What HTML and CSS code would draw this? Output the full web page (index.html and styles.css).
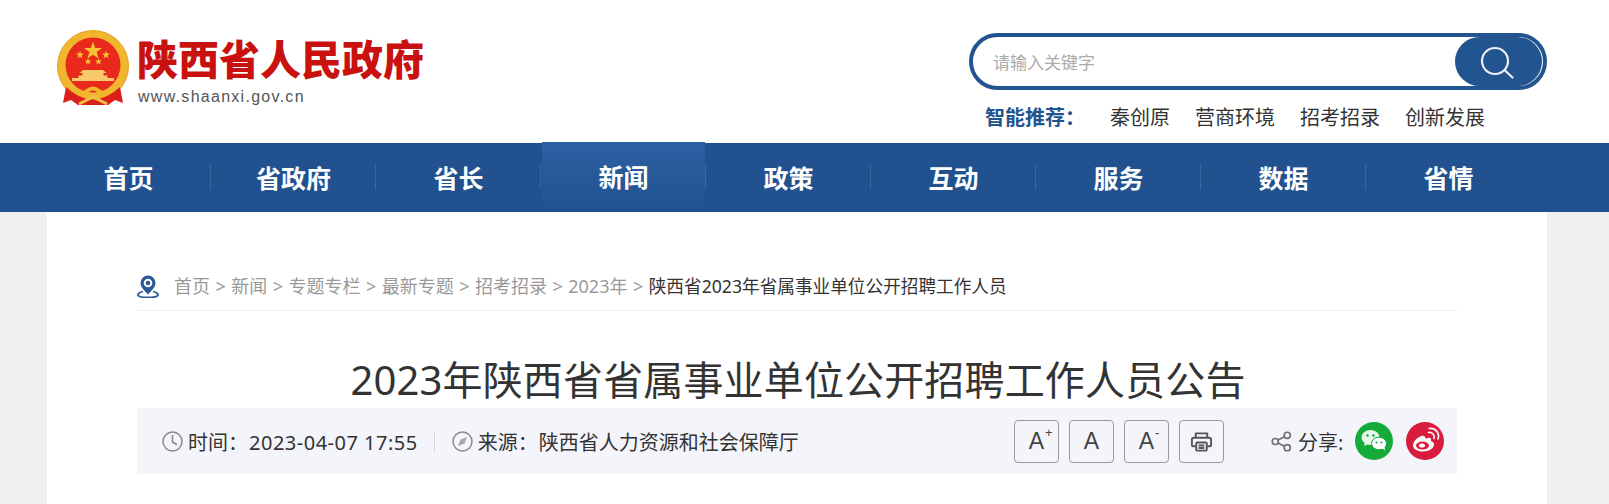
FILE: index.html
```html
<!DOCTYPE html>
<html lang="zh-CN">
<head>
<meta charset="utf-8">
<title>2023年陕西省省属事业单位公开招聘工作人员公告</title>
<link rel="stylesheet" href="styles.css">
</head>
<body>
<header class="header">
  <a class="logo">
    <svg class="emblem" viewBox="0 -4 72 76" width="72" height="76">
      <circle cx="36" cy="32" r="35.500" fill="#f2b52e"/>
      <circle cx="36" cy="32" r="35.500" fill="none" stroke="#e3a021" stroke-width="1"/>
      <circle cx="36" cy="31" r="27.500" fill="#e8291c"/>
      <path d="M36 7.500l2.200 6.400 6.800.1-5.400 4.100 2 6.500-5.600-3.900-5.600 3.900 2-6.500-5.400-4.100 6.800-.1z" fill="#f6c531"/>
      <path d="M23 16.500l1 2.900 3.100.1-2.500 1.900.9 3-2.500-1.800-2.500 1.800.9-3-2.500-1.900 3.100-.1z" fill="#f6c531"/>
      <path d="M49 16.500l1 2.900 3.100.1-2.500 1.900.9 3-2.500-1.800-2.500 1.800.9-3-2.500-1.900 3.100-.1z" fill="#f6c531"/>
      <path d="M31 24l.9 2.400 2.600.1-2 1.600.7 2.500-2.200-1.500-2.200 1.500.7-2.500-2-1.600 2.600-.1z" fill="#f6c531"/>
      <path d="M41.500 24l.9 2.400 2.600.1-2 1.600.7 2.500-2.200-1.500-2.200 1.500.7-2.500-2-1.600 2.600-.1z" fill="#f6c531"/>
      <path d="M26 36h20l3.500 3h-3v2.500h4v3H21.500v-3h4V39h-3z" fill="#f6c96a"/>
      <rect x="15" y="44" width="42" height="3" fill="#f6c96a"/>
      <path d="M9 53 L6 69 L14 66 L21 71 L51 71 L58 66 L66 69 L63 53 Q36 78 9 53Z" fill="#d9201a"/>
      <path d="M13 50 Q22 64 30 57 Q36 52 42 57 Q50 64 59 50" fill="none" stroke="#f2b52e" stroke-width="4"/>
      <path d="M22 70 L36 63 L50 70" fill="none" stroke="#f2c14a" stroke-width="3"/>
    </svg>
    <div class="logo-text">
      <div class="logo-title">陕西省人民政府</div>
      <div class="logo-url">www.shaanxi.gov.cn</div>
    </div>
  </a>
  <div class="tools">
    <form class="search">
      <span class="placeholder">请输入关键字</span>
      <button class="search-btn" type="button" aria-label="搜索">
        <svg viewBox="0 0 36 36" width="36" height="36" fill="none" stroke="#eef2f8" stroke-width="2.200" stroke-linecap="round"><circle cx="14" cy="17" r="13"/><path d="M24.500 27l7 6.500"/></svg>
      </button>
    </form>
    <div class="recommend">
      <b class="recommend-label">智能推荐：</b>
      <a>秦创原</a><a>营商环境</a><a>招考招录</a><a>创新发展</a>
    </div>
  </div>
</header>

<nav class="nav">
  <div class="nav-inner">
    <a class="nav-item">首页</a>
    <a class="nav-item">省政府</a>
    <a class="nav-item">省长</a>
    <a class="nav-item active">新闻</a>
    <a class="nav-item">政策</a>
    <a class="nav-item">互动</a>
    <a class="nav-item">服务</a>
    <a class="nav-item">数据</a>
    <a class="nav-item">省情</a>
  </div>
</nav>

<main class="main">
  <div class="crumbs">
    <svg class="pin" viewBox="0 0 22 24" width="22" height="24">
      <path d="M11 1.500a7.500 7.500 0 0 0-7.500 7.500c0 4.500 4 7.500 7.500 11.500 3.500-4 7.500-7 7.500-11.500A7.500 7.500 0 0 0 11 1.500z" fill="#2a5a96"/>
      <circle cx="11" cy="9" r="4.300" fill="#fff"/><circle cx="11" cy="9" r="2.300" fill="#2a5a96"/>
      <path d="M6 17.500C3 18.300 1 19.400 1 20.700 1 22.500 5.500 23.500 11 23.500s10-1 10-2.800c0-1.300-2-2.400-5-3.200" fill="none" stroke="#2a5a96" stroke-width="1.800"/>
    </svg>
    <span class="crumb-trail">首页 &gt; 新闻 &gt; 专题专栏 &gt; 最新专题 &gt; 招考招录 &gt; 2023年 &gt; <em class="crumb-current">陕西省2023年省属事业单位公开招聘工作人员</em></span>
  </div>
  <h1 class="title">2023年陕西省省属事业单位公开招聘工作人员公告</h1>
  <div class="meta">
    <svg class="meta-icon" viewBox="0 0 21 21" width="21" height="21" fill="none" stroke="#8a8a8a" stroke-width="1.500"><circle cx="10.500" cy="10.500" r="9.500"/><path d="M10.500 4.500v6.500l4 2.500" stroke-linecap="round"/></svg>
    <span class="meta-time">时间：<span class="meta-date">2023-04-07 17:55</span></span>
    <span class="meta-sep"></span>
    <svg class="meta-icon" viewBox="0 0 21 21" width="21" height="21" fill="none" stroke="#8a8a8a" stroke-width="1.500"><circle cx="10.500" cy="10.500" r="9.500"/><path d="M15 6l-6.500 2.500L6 15l6.500-2.500z" fill="#a8a8a8" stroke="none"/></svg>
    <span class="meta-source">来源：<span class="meta-org">陕西省人力资源和社会保障厅</span></span>
    <div class="font-btns">
      <span class="fbtn">A<sup class="fsup">+</sup></span>
      <span class="fbtn">A</span>
      <span class="fbtn">A<sup class="fsup">-</sup></span>
      <span class="fbtn">
        <svg viewBox="0 0 24 24" width="23" height="23" fill="none" stroke="#555" stroke-width="2" stroke-linejoin="round"><path d="M6 8V3.500h12V8"/><path d="M6 17H3a1 1 0 0 1-1-1v-6a2 2 0 0 1 2-2h16a2 2 0 0 1 2 2v6a1 1 0 0 1-1 1h-3"/><rect x="6.500" y="13" width="11" height="8.500" rx="1"/><path d="M9 16.200h6M9 18.800h6"/></svg>
      </span>
    </div>
    <svg class="share-icon" viewBox="0 0 22 22" width="21" height="21" fill="none" stroke="#6e6e6e" stroke-width="1.700"><circle cx="4.500" cy="11" r="3.200"/><circle cx="17" cy="4.500" r="3.200"/><circle cx="17" cy="17.500" r="3.200"/><path d="M7.400 9.500l6.700-3.500M7.400 12.500l6.700 3.500"/></svg>
    <span class="share-label">分享:</span>
    <span class="social wechat">
      <svg viewBox="0 0 38 38" width="38" height="38">
        <ellipse cx="15.500" cy="15.500" rx="9" ry="7.500" fill="#e6f6ea"/><path d="M10 20l-1 4 5-2.500z" fill="#e6f6ea"/>
        <ellipse cx="24" cy="21.500" rx="7.500" ry="6.300" fill="#fff" stroke="#14ab39" stroke-width="1"/><path d="M27 26l3 2.500-.5-4z" fill="#fff"/>
        <circle cx="12.500" cy="13.500" r="1.200" fill="#14ab39"/><circle cx="18.500" cy="13.500" r="1.200" fill="#14ab39"/>
        <circle cx="21.500" cy="20.500" r="1" fill="#14ab39"/><circle cx="26.500" cy="20.500" r="1" fill="#14ab39"/>
      </svg>
    </span>
    <span class="social weibo">
      <svg viewBox="0 0 38 38" width="38" height="38">
        <path d="M16.500 13.500c-5 1.500-9.500 6-9.500 10 0 3.500 4.500 6 10 6 6.500 0 11-3.500 11-7 0-2.200-2-3-3.200-3.400.8-2 .2-3.600-2.800-3.200-1.300.2-2.500.8-2.500.8s.5-3-3-3z" fill="#fff"/>
        <ellipse cx="16.500" cy="23.500" rx="6.500" ry="4" fill="#d91c3d"/>
        <ellipse cx="16" cy="23.500" rx="3" ry="2" fill="#fff"/>
        <path d="M22.500 10.500c3.800-.6 6.500 2.500 5.500 6M23 6.500c6.500-1 11 4.500 9 10.500" fill="none" stroke="#fff" stroke-width="1.600" stroke-linecap="round"/>
      </svg>
    </span>
  </div>
</main>
</body>
</html>
```
FILE: styles.css
```css
* { box-sizing: border-box; }
html, body { margin: 0; padding: 0; }
body {
  background: #f0f0f0;
  font-family: "Noto Sans", "Noto Sans CJK SC", "Liberation Sans", sans-serif;
  color: #333;
  overflow: hidden;
  height: 504px;
}
.header {
  height: 143px;
  background: #fff;
  display: flex;
  justify-content: space-between;
  padding: 30px 62px 0 57px;
}
.logo { display: flex; align-items: flex-start; height: 76px; }
.emblem { display: block; flex: none; }
.logo-text { margin-left: 8px; }
.logo-title {
  font-size: 41px;
  line-height: 42px;
  margin-top: 8px;
  font-weight: 900;
  color: #c9120f;
  width: 287px;
  white-space: nowrap;
}
.logo-url {
  font-family: "Liberation Sans", sans-serif;
  font-size: 16px;
  line-height: 20px;
  margin-top: 7px;
  margin-left: 1px;
  letter-spacing: 1.28px;
  color: #555;
}
.tools { width: 578px; padding-top: 3px; }
.search {
  height: 57px;
  border: 4px solid #22548f;
  border-radius: 29px;
  display: flex;
  align-items: center;
  justify-content: space-between;
  padding: 0 1px 0 20px;
}
.placeholder { font-size: 17px; color: #aaa; }
.search-btn {
  width: 87px;
  height: 49px;
  border: 0;
  border-radius: 25px;
  background: #22548f;
  padding: 0;
  display: flex;
  align-items: center;
  justify-content: center;
}
.recommend {
  display: flex;
  align-items: center;
  margin-top: 14px;
  padding-left: 16px;
  font-size: 20px;
  line-height: 28px;
  color: #333;
}
.recommend a { margin-right: 25px; }
.recommend-label { color: #22548f; font-weight: 700; width: 125px; white-space: nowrap; }
.nav { height: 69px; background: #21528f; }
.nav-inner { display: flex; height: 69px; margin-left: 45px; width: 1485px; }
.nav-item {
  width: 165px;
  height: 69px;
  display: flex;
  align-items: center;
  justify-content: center;
  padding: 0 0 2px 2px;
  color: #fff;
  font-size: 25px;
  font-weight: 700;
  position: relative;
}
.nav-item + .nav-item::before {
  content: "";
  position: absolute;
  left: 0;
  top: 22px;
  height: 25px;
  width: 1px;
  background: #3a67a0;
}
.nav-item.active {
  margin-top: -1px;
  height: 70px;
  background: linear-gradient(#2d60a4, #21528f) content-box;
}
.main {
  width: 1500px;
  height: 292px;
  margin-left: 47px;
  background: #fff;
  padding: 62px 90px 0;
}
.crumbs {
  height: 37px;
  display: flex;
  align-items: flex-start;
  border-bottom: 1px solid #eee;
}
.pin { flex: none; display: block; }
.crumb-trail {
  margin-left: 15px;
  font-size: 18px;
  line-height: 24px;
  word-spacing: 0.8px;
  color: #999;
  white-space: nowrap;
}
.crumb-current { font-style: normal; font-size: 17.65px; color: #333; }
.title {
  margin: 0;
  padding: 41px 0 0 2px;
  height: 97px;
  font-size: 40px;
  line-height: 56px;
  font-weight: 400;
  letter-spacing: 0.15px;
  text-align: center;
  color: #333;
  white-space: nowrap;
}
.meta {
  height: 66px;
  width: 1320px;
  background: #f3f5fa;
  display: flex;
  align-items: center;
  padding: 0 13px 0 25px;
  font-size: 20px;
  color: #333;
}
.meta-icon { flex: none; }
.meta-time { margin-left: 5px; white-space: nowrap; }
.meta-date { margin-left: 1px; letter-spacing: 0.5px; }
.meta-sep { width: 1px; height: 21px; background: #d5d5d5; margin: 0 17px 0 16px; }
.meta-source { margin-left: 5px; white-space: nowrap; }
.meta-org { margin-left: 1px; }
.font-btns { display: flex; gap: 10px; margin: 0 1px 0 auto; }
.fbtn {
  width: 45px;
  height: 43px;
  border: 1px solid #999;
  border-radius: 4px;
  display: flex;
  align-items: center;
  justify-content: center;
  font-family: "Liberation Sans", sans-serif;
  font-size: 23px;
  color: #444;
  position: relative;
}
.fsup { position: absolute; left: 30px; top: 6px; font-size: 13px; line-height: 12px; }
.share-icon { margin-left: 46px; flex: none; }
.share-label { margin-left: 6px; white-space: nowrap; width: 57px; }
.social {
  width: 38px;
  height: 38px;
  border-radius: 50%;
  flex: none;
  display: block;
}
.social svg { display: block; }
.wechat { background: #14ab39; }
.weibo { background: #d91c3d; margin-left: 13px; }
```
